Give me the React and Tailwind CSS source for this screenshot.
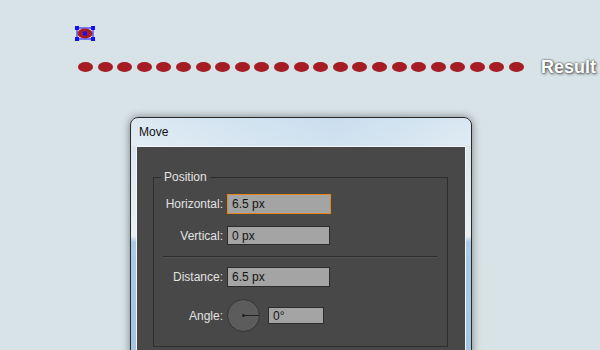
import React from 'react'

const dots = Array.from({ length: 23 }, (_, i) => i)

function SelectedShape() {
  return (
    <svg width="20" height="15" viewBox="0 0 20 15">
      <rect x="2" y="2" width="16" height="11" fill="none" stroke="#1010ff" strokeWidth="1" />
      <ellipse cx="10" cy="7.5" rx="7.5" ry="5" fill="#a51c24" />
      <rect x="0" y="0" width="4" height="4" fill="#1010ff" />
      <rect x="16" y="0" width="4" height="4" fill="#1010ff" />
      <rect x="0" y="11" width="4" height="4" fill="#1010ff" />
      <rect x="16" y="11" width="4" height="4" fill="#1010ff" />
      <rect x="8" y="5.5" width="4" height="4" fill="#1010ff" />
    </svg>
  )
}

function Field({ value, active, className = 'w-[104px] h-[20px]' }) {
  return (
    <div
      className={`${className} flex items-center bg-[#a4a4a4] pl-[4px] text-[12px] text-[#141414] ${
        active ? 'border-[1.5px] border-[#e8841c]' : 'border border-[#2c2c2c]'
      }`}
    >
      {value}
    </div>
  )
}

function Row({ label, children }) {
  return (
    <div className="flex items-center">
      <div className="w-[69px] text-right text-[12px] text-[#e2e2e2]">{label}</div>
      <div className="ml-[4px] flex items-center">{children}</div>
    </div>
  )
}

export default function App() {
  return (
    <div
      className="relative h-[350px] w-[600px] overflow-hidden bg-[#d8e3e8]"
      style={{ fontFamily: '"Liberation Sans", Arial, sans-serif' }}
    >
      <div className="pl-[75px] pt-[26px]">
        <SelectedShape />
      </div>

      <div className="mt-[17px] flex h-[18px] items-center pl-[78px]">
        <div className="flex gap-[4.6px]">
          {dots.map((i) => (
            <span key={i} className="block h-[10px] w-[15px] rounded-[50%] bg-[#a51c24]" />
          ))}
        </div>
        <span className="ml-[17px] text-[18px] font-bold leading-none text-white [text-shadow:0_0_2px_#3a3a3a,1px_1px_3px_#555]">
          Result
        </span>
      </div>

      <div className="ml-[130px] mt-[41px] w-[342px] rounded-t-[8px] border border-[#2a2a2a] bg-[linear-gradient(to_bottom,#cfe1ef_0px,#dce8f1_40px,#e8f0f4_118px,#aacae6_124px,#a4c4e2_240px)] shadow-[0_0_8px_rgba(0,0,0,0.45)]">
        <div className="flex h-[28px] items-center rounded-t-[7px] bg-[linear-gradient(to_right,rgba(255,255,255,0.25),rgba(190,215,235,0.3)_60%,rgba(255,255,255,0.2))] pl-[8px] text-[12px] text-[#111]">
          Move
        </div>
        <div className="mx-[5px] h-[220px] border-l border-r border-t border-[#f2f6f9] bg-[#484848] pl-[16px] pr-[17px] pt-[30px]">
          <div className="relative border border-[#2d2d2d] pb-[14px] pt-[16px]">
            <span className="absolute left-[7px] top-[-8px] bg-[#484848] px-[3px] text-[12px] leading-[14px] text-[#e2e2e2]">
              Position
            </span>
            <Row label="Horizontal:">
              <Field value="6.5 px" active />
            </Row>
            <div className="mt-[12px]">
              <Row label="Vertical:">
                <Field value="0 px" className="w-[103px] h-[19px]" />
              </Row>
            </div>
            <div className="mx-[9px] mt-[11px] h-px bg-[#2e2e2e] shadow-[0_1px_0_rgba(255,255,255,0.06)]" />
            <div className="mt-[10px]">
              <Row label="Distance:">
                <Field value="6.5 px" className="w-[103px] h-[20px]" />
              </Row>
            </div>
            <div className="mt-[12px]">
              <Row label="Angle:">
                <div className="relative h-[33px] w-[33px] rounded-full border border-[#333] bg-[#5c5c5c]">
                  <span className="absolute left-[15px] top-[15px] h-px w-[16px] bg-[#222]" />
                  <span className="absolute left-[14px] top-[14px] h-[3px] w-[3px] rounded-full bg-[#222]" />
                </div>
                <div className="ml-[8px]">
                  <Field value="0°" className="w-[56px] h-[17px]" />
                </div>
              </Row>
            </div>
          </div>
        </div>
      </div>
    </div>
  )
}
